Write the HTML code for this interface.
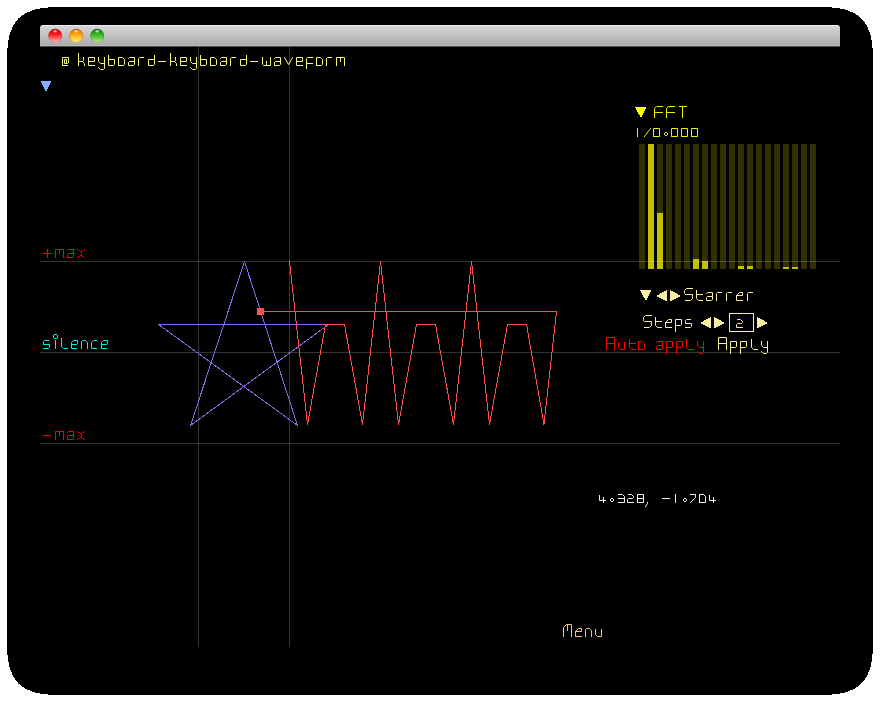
<!DOCTYPE html>
<html><head><meta charset="utf-8"><style>
html,body{margin:0;padding:0;background:#fff;width:880px;height:702px;overflow:hidden;font-family:"Liberation Sans",sans-serif}
svg{display:block}
</style></head><body>
<svg width="880" height="702" viewBox="0 0 880 702">
<path d="M57 7 L823 7 C859 7 873 21 873 57 L873 645 C873 681 859 695 823 695 L57 695 C21 695 7 681 7 645 L7 57 C7 21 21 7 57 7 Z" fill="#000" shape-rendering="crispEdges"/>
<defs>
<linearGradient id="tb" x1="0" y1="0" x2="0" y2="1">
<stop offset="0" stop-color="#d8d8d8"/><stop offset="1" stop-color="#aaaaaa"/></linearGradient>
<linearGradient id="rd" x1="0" y1="0" x2="0" y2="1"><stop offset="0" stop-color="#e00000"/><stop offset="0.35" stop-color="#ff1010"/><stop offset="0.7" stop-color="#ff6a6a"/><stop offset="1" stop-color="#ffc0c0"/></linearGradient>
<linearGradient id="yl" x1="0" y1="0" x2="0" y2="1"><stop offset="0" stop-color="#e07000"/><stop offset="0.35" stop-color="#ffa000"/><stop offset="0.7" stop-color="#ffd040"/><stop offset="1" stop-color="#fff080"/></linearGradient>
<linearGradient id="gr" x1="0" y1="0" x2="0" y2="1"><stop offset="0" stop-color="#108010"/><stop offset="0.35" stop-color="#30b020"/><stop offset="0.7" stop-color="#70d050"/><stop offset="1" stop-color="#b8f090"/></linearGradient>
<linearGradient id="rds" x1="0" y1="0" x2="0" y2="1"><stop offset="0" stop-color="#900000"/><stop offset="1" stop-color="#e08080"/></linearGradient>
<linearGradient id="yls" x1="0" y1="0" x2="0" y2="1"><stop offset="0" stop-color="#b04000"/><stop offset="1" stop-color="#e0b040"/></linearGradient>
<linearGradient id="grs" x1="0" y1="0" x2="0" y2="1"><stop offset="0" stop-color="#005000"/><stop offset="1" stop-color="#80c060"/></linearGradient>
<radialGradient id="hl" cx="0.5" cy="0.5" r="0.5"><stop offset="0" stop-color="#fff" stop-opacity="0.95"/><stop offset="1" stop-color="#fff" stop-opacity="0"/></radialGradient>
</defs>
<path d="M40 46 L40 28 Q40 25 43 25 L837 25 Q840 25 840 28 L840 46 Z" fill="url(#tb)"/>
<rect x="42" y="25" width="796" height="1" fill="#ececec"/>
<rect x="40" y="45" width="800" height="1" fill="#b9b9b9"/>
<rect x="40" y="46" width="800" height="1" fill="#4e4e4e"/>
<circle cx="55.2" cy="35.8" r="6.6" fill="url(#rd)" stroke="url(#rds)" stroke-width="0.8"/>
<ellipse cx="55.2" cy="31.3" rx="2.6" ry="1.8" fill="url(#hl)"/>
<circle cx="76.2" cy="35.8" r="6.6" fill="url(#yl)" stroke="url(#yls)" stroke-width="0.8"/>
<ellipse cx="76.2" cy="31.3" rx="2.6" ry="1.8" fill="url(#hl)"/>
<circle cx="97.2" cy="35.8" r="6.6" fill="url(#gr)" stroke="url(#grs)" stroke-width="0.8"/>
<ellipse cx="97.2" cy="31.3" rx="2.6" ry="1.8" fill="url(#hl)"/>
<rect x="639" y="144" width="6" height="125" fill="#333000"/>
<rect x="648" y="144" width="6" height="125" fill="#333000"/>
<rect x="648" y="144" width="6" height="125" fill="#c3c000"/>
<rect x="657" y="144" width="6" height="125" fill="#333000"/>
<rect x="657" y="213" width="6" height="56" fill="#c3c000"/>
<rect x="666" y="144" width="6" height="125" fill="#333000"/>
<rect x="675" y="144" width="6" height="125" fill="#333000"/>
<rect x="684" y="144" width="6" height="125" fill="#333000"/>
<rect x="693" y="144" width="6" height="125" fill="#333000"/>
<rect x="693" y="259" width="6" height="10" fill="#c3c000"/>
<rect x="702" y="144" width="6" height="125" fill="#333000"/>
<rect x="702" y="261" width="6" height="8" fill="#c3c000"/>
<rect x="711" y="144" width="6" height="125" fill="#333000"/>
<rect x="720" y="144" width="6" height="125" fill="#333000"/>
<rect x="729" y="144" width="6" height="125" fill="#333000"/>
<rect x="738" y="144" width="6" height="125" fill="#333000"/>
<rect x="738" y="266" width="6" height="3" fill="#c3c000"/>
<rect x="747" y="144" width="6" height="125" fill="#333000"/>
<rect x="747" y="266" width="6" height="3" fill="#c3c000"/>
<rect x="756" y="144" width="6" height="125" fill="#333000"/>
<rect x="765" y="144" width="6" height="125" fill="#333000"/>
<rect x="774" y="144" width="6" height="125" fill="#333000"/>
<rect x="783" y="144" width="6" height="125" fill="#333000"/>
<rect x="783" y="267" width="6" height="2" fill="#c3c000"/>
<rect x="792" y="144" width="6" height="125" fill="#333000"/>
<rect x="792" y="267" width="6" height="2" fill="#c3c000"/>
<rect x="801" y="144" width="6" height="125" fill="#333000"/>
<rect x="810" y="144" width="6" height="125" fill="#333000"/>
<g shape-rendering="crispEdges">
<rect x="40" y="261" width="800" height="1" fill="rgba(255,255,255,0.2)"/>
<rect x="40" y="352" width="800" height="1" fill="rgba(255,255,255,0.2)"/>
<rect x="40" y="443" width="800" height="1" fill="rgba(255,255,255,0.2)"/>
<rect x="198" y="46" width="1" height="601" fill="rgba(255,255,255,0.2)"/>
<rect x="289" y="46" width="1" height="601" fill="rgba(255,255,255,0.2)"/>
</g>
<path d="M43.5 253.5 L50.5 253.5 M47.5 249.5 L47.5 257.5 M55.5 257.5 L55.5 249.5 L63.5 249.5 L63.5 257.5 M59.5 249.5 L59.5 253.5 M67.5 250.5 L68.5 249.5 L73.5 249.5 L73.5 256.5 L72.5 257.5 L67.5 257.5 L67.5 254.5 L68.5 253.5 L73.5 253.5 M77.5 249.5 L78.5 250.5 L79.5 250.5 L81.5 252.5 L81.5 254.5 L79.5 256.5 L78.5 256.5 L77.5 257.5 M84.5 249.5 L83.5 250.5 L82.5 250.5 L81.5 251.5 M81.5 255.5 L82.5 256.5 L83.5 256.5 L84.5 257.5" fill="none" stroke="#ff0000" stroke-width="1" stroke-linecap="square" stroke-linejoin="miter"/>
<path d="M48.5 340.5 L44.5 340.5 L43.5 341.5 L43.5 344.5 L49.5 344.5 L49.5 347.5 L48.5 348.5 L43.5 348.5 M55.5 340.5 L55.5 348.5 M61.5 338.5 L61.5 346.5 L63.5 348.5 L67.5 348.5 M76.5 348.5 L71.5 348.5 L71.5 342.5 L73.5 340.5 L77.5 340.5 L77.5 343.5 L76.5 344.5 L71.5 344.5 M81.5 348.5 L81.5 341.5 L82.5 340.5 L85.5 340.5 L87.5 342.5 L87.5 348.5 M96.5 340.5 L93.5 340.5 L91.5 342.5 L91.5 348.5 L96.5 348.5 M106.5 348.5 L101.5 348.5 L101.5 342.5 L103.5 340.5 L107.5 340.5 L107.5 343.5 L106.5 344.5 L101.5 344.5" fill="none" stroke="#00f4f4" stroke-width="1" stroke-linecap="square" stroke-linejoin="miter"/><path d="M54 334h3v1h-3z M54 338h3v1h-3z M53 335h1v3h-1z M57 335h1v3h-1z" fill="#00f4f4" shape-rendering="crispEdges"/>
<path d="M43.5 435.5 L50.5 435.5 M55.5 439.5 L55.5 431.5 L63.5 431.5 L63.5 439.5 M59.5 431.5 L59.5 435.5 M67.5 432.5 L68.5 431.5 L73.5 431.5 L73.5 438.5 L72.5 439.5 L67.5 439.5 L67.5 436.5 L68.5 435.5 L73.5 435.5 M77.5 431.5 L78.5 432.5 L79.5 432.5 L81.5 434.5 L81.5 436.5 L79.5 438.5 L78.5 438.5 L77.5 439.5 M84.5 431.5 L83.5 432.5 L82.5 432.5 L81.5 433.5 M81.5 437.5 L82.5 438.5 L83.5 438.5 L84.5 439.5" fill="none" stroke="#ff0000" stroke-width="1" stroke-linecap="square" stroke-linejoin="miter"/>
<path d="M244.5 261.5 L297.5 425.5 L158.5 324.5 L328.5 324.5 L190.5 425.5 L244.5 261.5" fill="none" stroke="#8a68e6" stroke-width="1" shape-rendering="crispEdges"/>
<path d="M289.5 261.5 L307.5 424.5 L325.5 324.5 L344.5 324.5 L362.5 424.5 L380.5 261.5 L398.5 424.5 L416.5 324.5 L435.5 324.5 L453.5 424.5 L471.5 261.5 L489.5 424.5 L507.5 324.5 L526.5 324.5 L544.0 424.5 L556.5 311.5 L260.5 311.5" fill="none" stroke="#ff5050" stroke-width="1" shape-rendering="crispEdges"/>
<rect x="257" y="308" width="7" height="7" fill="#ff5050"/>
<path d="M68.5 62.5 L68.5 57.5 L62.5 57.5 L62.5 65.5 L67.5 65.5 M68.5 62.5 L67.5 63.5 L64.5 63.5 L64.5 59.5 L66.5 59.5 L66.5 63.5" fill="none" stroke="#f8f880" stroke-width="1" stroke-linecap="square" stroke-linejoin="miter"/><path d="M78.5 53.5 L78.5 65.5 M78.5 61.5 L82.5 61.5 L83.5 60.5 L83.5 57.5 M82.5 61.5 L84.5 63.5 L84.5 65.5" fill="none" stroke="#f8f880" stroke-width="1" stroke-linecap="square" stroke-linejoin="miter"/><path d="M94.5 65.5 L88.5 65.5 L88.5 61.5 L94.5 61.5 L94.5 57.5 L88.5 57.5 L88.5 61.5" fill="none" stroke="#f8f880" stroke-width="1" stroke-linecap="square" stroke-linejoin="miter"/><path d="M98.5 57.5 L98.5 61.5 L100.5 63.5 L104.5 63.5 M104.5 57.5 L104.5 68.5 L103.5 69.5 L100.5 69.5 L98.5 67.5" fill="none" stroke="#f8f880" stroke-width="1" stroke-linecap="square" stroke-linejoin="miter"/><path d="M108.5 55.5 L108.5 65.5 L113.5 65.5 L114.5 64.5 L114.5 59.5 L108.5 59.5" fill="none" stroke="#f8f880" stroke-width="1" stroke-linecap="square" stroke-linejoin="miter"/><path d="M118.5 65.5 L118.5 57.5 L122.5 57.5 L124.5 59.5 L124.5 64.5 L123.5 65.5 L118.5 65.5" fill="none" stroke="#f8f880" stroke-width="1" stroke-linecap="square" stroke-linejoin="miter"/><path d="M128.5 58.5 L129.5 57.5 L134.5 57.5 L134.5 64.5 L133.5 65.5 L128.5 65.5 L128.5 62.5 L129.5 61.5 L134.5 61.5" fill="none" stroke="#f8f880" stroke-width="1" stroke-linecap="square" stroke-linejoin="miter"/><path d="M138.5 65.5 L138.5 58.5 L139.5 57.5 L143.5 57.5" fill="none" stroke="#f8f880" stroke-width="1" stroke-linecap="square" stroke-linejoin="miter"/><path d="M154.5 55.5 L154.5 64.5 L153.5 65.5 L148.5 65.5 L148.5 59.5 L154.5 59.5" fill="none" stroke="#f8f880" stroke-width="1" stroke-linecap="square" stroke-linejoin="miter"/><path d="M158.5 61.5 L165.5 61.5" fill="none" stroke="#f8f880" stroke-width="1" stroke-linecap="square" stroke-linejoin="miter"/><path d="M170.5 53.5 L170.5 65.5 M170.5 61.5 L174.5 61.5 L175.5 60.5 L175.5 57.5 M174.5 61.5 L176.5 63.5 L176.5 65.5" fill="none" stroke="#f8f880" stroke-width="1" stroke-linecap="square" stroke-linejoin="miter"/><path d="M186.5 65.5 L180.5 65.5 L180.5 61.5 L186.5 61.5 L186.5 57.5 L180.5 57.5 L180.5 61.5" fill="none" stroke="#f8f880" stroke-width="1" stroke-linecap="square" stroke-linejoin="miter"/><path d="M190.5 57.5 L190.5 61.5 L192.5 63.5 L196.5 63.5 M196.5 57.5 L196.5 68.5 L195.5 69.5 L192.5 69.5 L190.5 67.5" fill="none" stroke="#f8f880" stroke-width="1" stroke-linecap="square" stroke-linejoin="miter"/><path d="M200.5 55.5 L200.5 65.5 L205.5 65.5 L206.5 64.5 L206.5 59.5 L200.5 59.5" fill="none" stroke="#f8f880" stroke-width="1" stroke-linecap="square" stroke-linejoin="miter"/><path d="M210.5 65.5 L210.5 57.5 L214.5 57.5 L216.5 59.5 L216.5 64.5 L215.5 65.5 L210.5 65.5" fill="none" stroke="#f8f880" stroke-width="1" stroke-linecap="square" stroke-linejoin="miter"/><path d="M220.5 58.5 L221.5 57.5 L226.5 57.5 L226.5 64.5 L225.5 65.5 L220.5 65.5 L220.5 62.5 L221.5 61.5 L226.5 61.5" fill="none" stroke="#f8f880" stroke-width="1" stroke-linecap="square" stroke-linejoin="miter"/><path d="M230.5 65.5 L230.5 58.5 L231.5 57.5 L235.5 57.5" fill="none" stroke="#f8f880" stroke-width="1" stroke-linecap="square" stroke-linejoin="miter"/><path d="M246.5 55.5 L246.5 64.5 L245.5 65.5 L240.5 65.5 L240.5 59.5 L246.5 59.5" fill="none" stroke="#f8f880" stroke-width="1" stroke-linecap="square" stroke-linejoin="miter"/><path d="M250.5 61.5 L257.5 61.5" fill="none" stroke="#f8f880" stroke-width="1" stroke-linecap="square" stroke-linejoin="miter"/><path d="M262.5 57.5 L262.5 64.5 L263.5 65.5 L270.5 65.5 L270.5 57.5 M266.5 65.5 L266.5 61.5" fill="none" stroke="#f8f880" stroke-width="1" stroke-linecap="square" stroke-linejoin="miter"/><path d="M274.5 58.5 L275.5 57.5 L280.5 57.5 L280.5 64.5 L279.5 65.5 L274.5 65.5 L274.5 62.5 L275.5 61.5 L280.5 61.5" fill="none" stroke="#f8f880" stroke-width="1" stroke-linecap="square" stroke-linejoin="miter"/><path d="M284.5 57.5 L288.5 64.5 L292.5 57.5" fill="none" stroke="#f8f880" stroke-width="1" stroke-linecap="square" stroke-linejoin="miter"/><path d="M302.5 65.5 L296.5 65.5 L296.5 61.5 L302.5 61.5 L302.5 57.5 L296.5 57.5 L296.5 61.5" fill="none" stroke="#f8f880" stroke-width="1" stroke-linecap="square" stroke-linejoin="miter"/><path d="M312.5 57.5 L307.5 57.5 L306.5 58.5 L306.5 68.5 M306.5 63.5 L312.5 63.5" fill="none" stroke="#f8f880" stroke-width="1" stroke-linecap="square" stroke-linejoin="miter"/><path d="M316.5 65.5 L316.5 57.5 L320.5 57.5 L322.5 59.5 L322.5 64.5 L321.5 65.5 L316.5 65.5" fill="none" stroke="#f8f880" stroke-width="1" stroke-linecap="square" stroke-linejoin="miter"/><path d="M326.5 65.5 L326.5 58.5 L327.5 57.5 L331.5 57.5" fill="none" stroke="#f8f880" stroke-width="1" stroke-linecap="square" stroke-linejoin="miter"/><path d="M336.5 65.5 L336.5 57.5 L344.5 57.5 L344.5 65.5 M340.5 57.5 L340.5 61.5" fill="none" stroke="#f8f880" stroke-width="1" stroke-linecap="square" stroke-linejoin="miter"/>
<path d="M41 81h10v1h-10zM41 82h10v1h-10zM42 83h8v1h-8zM42 84h8v1h-8zM43 85h6v1h-6zM43 86h6v1h-6zM44 87h4v1h-4zM44 88h4v1h-4zM45 89h2v1h-2zM45 90h2v1h-2z" fill="#84b0ff" shape-rendering="crispEdges"/>
<path d="M635 107h11v1h-11zM636 108h10v1h-10zM636 109h9v1h-9zM637 110h8v1h-8zM637 111h7v1h-7zM638 112h6v1h-6zM638 113h5v1h-5zM639 114h4v1h-4zM640 115h2v1h-2zM640 116h2v1h-2z" fill="#ffff00" shape-rendering="crispEdges"/>
<path d="M654.5 117.5 L654.5 108.5 L656.5 106.5 L662.5 106.5 M654.5 112.5 L662.5 112.5 M666.5 117.5 L666.5 108.5 L668.5 106.5 L674.5 106.5 M666.5 112.5 L674.5 112.5 M679.5 106.5 L686.5 106.5 M682.5 106.5 L682.5 117.5" fill="none" stroke="#f0f000" stroke-width="1" stroke-linecap="square" stroke-linejoin="miter"/>
<path d="M637.5 128.5 L637.5 136.5 M644.5 136.5 L650.5 128.5 M653.5 136.5 L653.5 128.5 L659.5 128.5 L659.5 136.5 L653.5 136.5 M671.5 136.5 L671.5 128.5 L677.5 128.5 L677.5 136.5 L671.5 136.5 M681.5 136.5 L681.5 128.5 L687.5 128.5 L687.5 136.5 L681.5 136.5 M691.5 136.5 L691.5 128.5 L697.5 128.5 L697.5 136.5 L691.5 136.5" fill="none" stroke="#f0f000" stroke-width="1" stroke-linecap="square" stroke-linejoin="miter"/><path d="M665 132h2v1h-2z M665 135h2v1h-2z M664 133h1v2h-1z M667 133h1v2h-1z" fill="#f0f000" shape-rendering="crispEdges"/>
<path d="M640 290h11v1h-11zM641 291h10v1h-10zM641 292h9v1h-9zM642 293h8v1h-8zM642 294h7v1h-7zM643 295h6v1h-6zM643 296h5v1h-5zM644 297h4v1h-4zM645 298h2v1h-2zM645 299h2v1h-2z" fill="#f8f0a0" shape-rendering="crispEdges"/>
<path d="M666 290h1v11h-1zM665 291h1v10h-1zM664 291h1v9h-1zM663 292h1v8h-1zM662 292h1v7h-1zM661 293h1v6h-1zM660 293h1v5h-1zM659 294h1v4h-1zM658 295h1v2h-1zM657 295h1v2h-1z" fill="#f8f0a0" shape-rendering="crispEdges"/>
<path d="M670 290h1v11h-1zM671 291h1v10h-1zM672 291h1v9h-1zM673 292h1v8h-1zM674 292h1v7h-1zM675 293h1v6h-1zM676 293h1v5h-1zM677 294h1v4h-1zM678 295h1v2h-1zM679 295h1v2h-1z" fill="#f8f0a0" shape-rendering="crispEdges"/>
<path d="M692.5 288.5 L686.5 288.5 L684.5 290.5 L684.5 293.5 L685.5 294.5 L692.5 294.5 L692.5 298.5 L690.5 300.5 L685.5 300.5 M696.5 290.5 L696.5 298.5 L698.5 300.5 L702.5 300.5 M696.5 294.5 L702.5 294.5 M706.5 293.5 L707.5 292.5 L712.5 292.5 L712.5 299.5 L711.5 300.5 L706.5 300.5 L706.5 297.5 L707.5 296.5 L712.5 296.5 M716.5 300.5 L716.5 293.5 L717.5 292.5 L721.5 292.5 M726.5 300.5 L726.5 293.5 L727.5 292.5 L731.5 292.5 M742.5 300.5 L736.5 300.5 L736.5 295.5 L739.5 292.5 L742.5 292.5 L742.5 295.5 L736.5 295.5 M747.5 300.5 L747.5 293.5 L748.5 292.5 L752.5 292.5" fill="none" stroke="#f8f0a0" stroke-width="1" stroke-linecap="square" stroke-linejoin="miter"/>
<path d="M651.5 315.5 L645.5 315.5 L643.5 317.5 L643.5 320.5 L644.5 321.5 L651.5 321.5 L651.5 325.5 L649.5 327.5 L644.5 327.5 M655.5 317.5 L655.5 325.5 L657.5 327.5 L661.5 327.5 M655.5 321.5 L661.5 321.5 M671.5 327.5 L665.5 327.5 L665.5 322.5 L668.5 319.5 L671.5 319.5 L671.5 322.5 L665.5 322.5 M675.5 331.5 L675.5 319.5 L681.5 319.5 L681.5 324.5 L680.5 325.5 L675.5 325.5 M690.5 319.5 L686.5 319.5 L685.5 320.5 L685.5 323.5 L691.5 323.5 L691.5 326.5 L690.5 327.5 L685.5 327.5" fill="none" stroke="#f8f0a0" stroke-width="1" stroke-linecap="square" stroke-linejoin="miter"/>
<path d="M710 317h1v11h-1zM709 318h1v10h-1zM708 318h1v9h-1zM707 319h1v8h-1zM706 319h1v7h-1zM705 320h1v6h-1zM704 320h1v5h-1zM703 321h1v4h-1zM702 322h1v2h-1zM701 322h1v2h-1z" fill="#f8f0a0" shape-rendering="crispEdges"/>
<path d="M714 317h1v11h-1zM715 318h1v10h-1zM716 318h1v9h-1zM717 319h1v8h-1zM718 319h1v7h-1zM719 320h1v6h-1zM720 320h1v5h-1zM721 321h1v4h-1zM722 322h1v2h-1zM723 322h1v2h-1z" fill="#f8f0a0" shape-rendering="crispEdges"/>
<rect x="729.5" y="313.5" width="24" height="18" fill="none" stroke="#f8f0a0" stroke-width="1"/>
<path d="M737.5 319.5 L740.5 319.5 L742.5 321.5 L742.5 322.5 L741.5 323.5 L737.5 323.5 L736.5 324.5 L736.5 327.5 L742.5 327.5" fill="none" stroke="#f8f0a0" stroke-width="1" stroke-linecap="square" stroke-linejoin="miter"/>
<path d="M757 317h1v11h-1zM758 318h1v10h-1zM759 318h1v9h-1zM760 319h1v8h-1zM761 319h1v7h-1zM762 320h1v6h-1zM763 320h1v5h-1zM764 321h1v4h-1zM765 322h1v2h-1zM766 322h1v2h-1z" fill="#f8f0a0" shape-rendering="crispEdges"/>
<path d="M606.5 349.5 L606.5 337.5 L614.5 337.5 L614.5 349.5 M606.5 343.5 L614.5 343.5 M618.5 342.5 L618.5 347.5 L620.5 349.5 L624.5 349.5 L624.5 342.5 M629.5 339.5 L629.5 347.5 L631.5 349.5 L635.5 349.5 M629.5 343.5 L635.5 343.5 M638.5 349.5 L638.5 341.5 L642.5 341.5 L644.5 343.5 L644.5 348.5 L643.5 349.5 L638.5 349.5 M656.5 342.5 L657.5 341.5 L662.5 341.5 L662.5 348.5 L661.5 349.5 L656.5 349.5 L656.5 346.5 L657.5 345.5 L662.5 345.5 M666.5 353.5 L666.5 341.5 L672.5 341.5 L672.5 346.5 L671.5 347.5 L666.5 347.5 M676.5 353.5 L676.5 341.5 L682.5 341.5 L682.5 346.5 L681.5 347.5 L676.5 347.5 M686.5 339.5 L686.5 347.5 L688.5 349.5 L692.5 349.5 M697.5 341.5 L697.5 345.5 L699.5 347.5 L703.5 347.5 M703.5 341.5 L703.5 352.5 L702.5 353.5 L699.5 353.5 L697.5 351.5" fill="none" stroke="#ff0000" stroke-width="1" stroke-linecap="square" stroke-linejoin="miter"/>
<path d="M718.5 349.5 L718.5 337.5 L726.5 337.5 L726.5 349.5 M718.5 343.5 L726.5 343.5 M730.5 353.5 L730.5 341.5 L736.5 341.5 L736.5 346.5 L735.5 347.5 L730.5 347.5 M740.5 353.5 L740.5 341.5 L746.5 341.5 L746.5 346.5 L745.5 347.5 L740.5 347.5 M751.5 339.5 L751.5 347.5 L753.5 349.5 L757.5 349.5 M761.5 341.5 L761.5 345.5 L763.5 347.5 L767.5 347.5 M767.5 341.5 L767.5 352.5 L766.5 353.5 L763.5 353.5 L761.5 351.5" fill="none" stroke="#f8f0a0" stroke-width="1" stroke-linecap="square" stroke-linejoin="miter"/>
<path d="M599.5 495.5 L599.5 500.5 L605.5 500.5 M603.5 497.5 L603.5 502.5 M618.5 494.5 L622.5 494.5 L624.5 496.5 L624.5 502.5 L618.5 502.5 M618.5 498.5 L624.5 498.5 M628.5 494.5 L631.5 494.5 L633.5 496.5 L633.5 497.5 L632.5 498.5 L628.5 498.5 L627.5 499.5 L627.5 502.5 L633.5 502.5 M637.5 502.5 L637.5 494.5 L643.5 494.5 L643.5 502.5 L637.5 502.5 M637.5 498.5 L643.5 498.5 M647.5 502.5 L647.5 503.5 L645.5 506.5 M662.5 498.5 L669.5 498.5 M675.5 494.5 L675.5 502.5 M690.5 494.5 L695.5 494.5 L695.5 497.5 L690.5 502.5 M699.5 502.5 L699.5 494.5 L703.5 494.5 L705.5 496.5 L705.5 502.5 L699.5 502.5 M709.5 495.5 L709.5 500.5 L715.5 500.5 M713.5 497.5 L713.5 502.5" fill="none" stroke="#f4f4f4" stroke-width="1" stroke-linecap="square" stroke-linejoin="miter"/><path d="M611 498h2v1h-2z M611 501h2v1h-2z M610 499h1v2h-1z M613 499h1v2h-1z M684 498h2v1h-2z M684 501h2v1h-2z M683 499h1v2h-1z M686 499h1v2h-1z" fill="#f4f4f4" shape-rendering="crispEdges"/>
<path d="M563.5 636.5 L563.5 627.5 L566.5 624.5 L571.5 624.5 L571.5 636.5 M567.5 624.5 L567.5 630.5 M581.5 636.5 L575.5 636.5 L575.5 631.5 L578.5 628.5 L581.5 628.5 L581.5 631.5 L575.5 631.5 M585.5 636.5 L585.5 629.5 L586.5 628.5 L589.5 628.5 L591.5 630.5 L591.5 636.5 M595.5 629.5 L595.5 634.5 L597.5 636.5 L601.5 636.5 L601.5 629.5" fill="none" stroke="#f4c484" stroke-width="1" stroke-linecap="square" stroke-linejoin="miter"/>
</svg>
</body></html>
